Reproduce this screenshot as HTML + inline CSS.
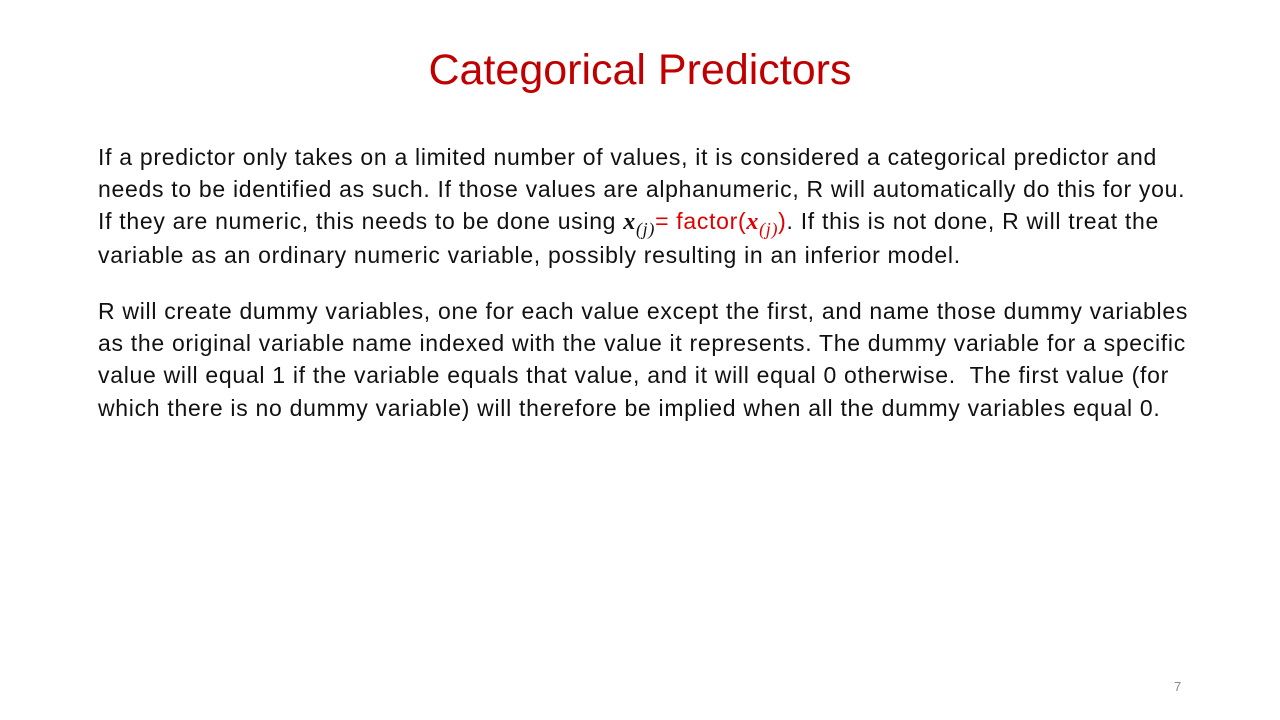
<!DOCTYPE html>
<html><head><meta charset="utf-8"><style>
body{margin:0;width:1280px;height:720px;background:#fff;position:relative;overflow:hidden;font-family:"Liberation Sans",sans-serif;}
.t{position:absolute;left:0;width:1280px;top:45px;text-align:center;color:#c00000;font-size:43px;line-height:50px;}
.l{position:absolute;left:98px;white-space:nowrap;font-size:23px;letter-spacing:0.7px;color:#111;line-height:26px;}
.m{font-family:"Liberation Serif",serif;font-style:italic;font-weight:bold;font-size:24px;}
.s{font-family:"Liberation Serif",serif;font-style:italic;font-size:18px;position:relative;top:6px;}
.r{color:#e00000;}
.n{position:absolute;left:1174px;top:679px;font-size:13px;color:#888;}
</style></head><body>
<div class="t">Categorical Predictors</div>
<div class="l" style="top:144px">If a predictor only takes on a limited number of values, it is considered a categorical predictor and</div>
<div class="l" style="top:176px">needs to be identified as such. If those values are alphanumeric, R will automatically do this for you.</div>
<div class="l" style="top:208px">If they are numeric, this needs to be done using <span class="m">x</span><span class="s">(j)</span><span class="r">= factor(<span class="m">x</span><span class="s">(j)</span>)</span>. If this is not done, R will treat the</div>
<div class="l" style="top:242px">variable as an ordinary numeric variable, possibly resulting in an inferior model.</div>
<div class="l" style="top:298px">R will create dummy variables, one for each value except the first, and name those dummy variables</div>
<div class="l" style="top:330px">as the original variable name indexed with the value it represents. The dummy variable for a specific</div>
<div class="l" style="top:362px">value will equal 1 if the variable equals that value, and it will equal 0 otherwise.&nbsp; The first value (for</div>
<div class="l" style="top:395px">which there is no dummy variable) will therefore be implied when all the dummy variables equal 0.</div>
<div class="n">7</div>
</body></html>
